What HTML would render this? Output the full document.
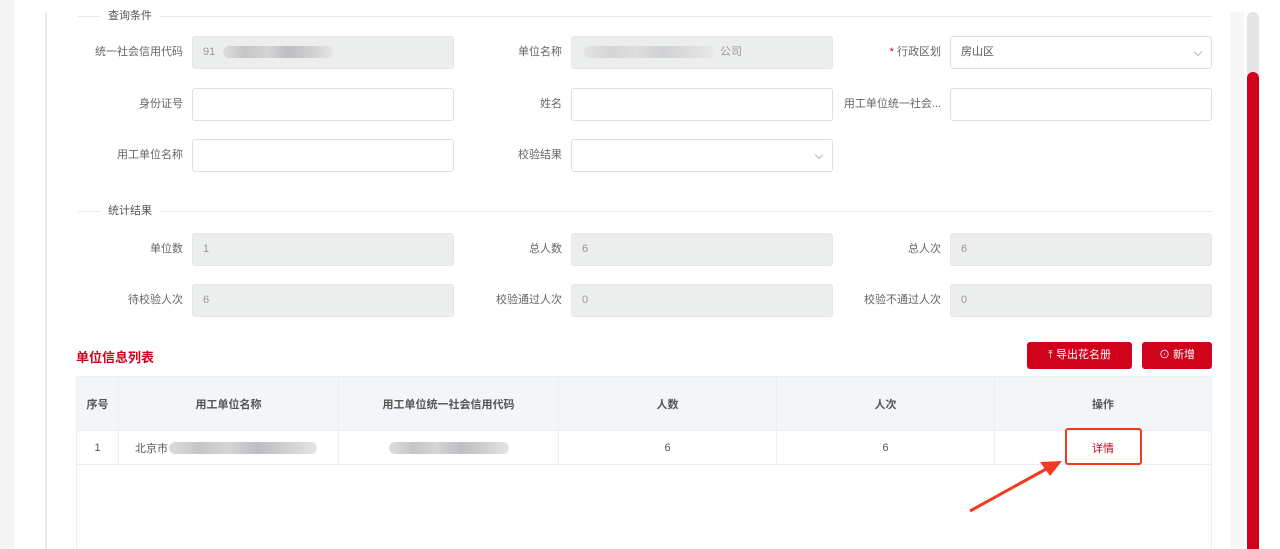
<!DOCTYPE html>
<html><head><meta charset="utf-8"><style>
*{box-sizing:border-box;margin:0;padding:0}
html,body{width:1280px;height:549px;overflow:hidden}
body{background:#fff;font-family:"Liberation Sans","Noto Sans CJK SC",sans-serif;font-size:12px;color:#666;position:relative}
.a{position:absolute}
.lbl{position:absolute;text-align:right;width:120px;line-height:32px;font-size:11px;color:#666}
.inp{position:absolute;width:262px;height:33px;border:1px solid #dcdfe6;border-radius:3px;background:#fff;line-height:31px;padding-left:10px;color:#999;font-size:11px}
.dis{background:#eceded;border-color:#e4e6e8}
.sec{position:absolute;left:78px;width:1134px;height:1px;background:#e6e9ee}
.sect{position:absolute;left:100px;background:#fff;padding:0 8px;font-size:11px;color:#555;line-height:14px}
.chev{position:absolute;right:10px;top:12px;width:6px;height:6px;border-right:1px solid #bbb;border-bottom:1px solid #bbb;transform:rotate(45deg)}
.btn{position:absolute;background:#d0021b;color:#fff;border-radius:3px;height:27px;line-height:27px;text-align:center;font-size:11px}
.blur{position:absolute;height:12px;background:linear-gradient(90deg,#ddd,#c6c6c6,#d4d4d4,#bdbec2,#d0d0d0,#e4e4e4);border-radius:6px}
table{border-collapse:collapse;position:absolute;left:76px;top:376px;width:1136px}
td,th{border:1px solid #ebeef5;text-align:center;font-size:11px;color:#555}
th{background:#f3f6f9;height:54px;font-weight:bold;color:#555}
td{height:34px}
</style></head><body>
<div class="a" style="left:0;top:0;width:14px;height:549px;background:#f4f4f5"></div>
<div class="a" style="left:45px;top:12px;width:2px;height:537px;background:#ececec"></div>
<div class="a" style="left:1230px;top:12px;width:14px;height:537px;background:#f7f7f7"></div>
<div class="a" style="left:1247px;top:12px;width:12px;height:537px;background:#e4e4e4;border-radius:6px"></div>
<div class="a" style="left:1247px;top:72px;width:12px;height:477px;background:#d0021b;border-radius:6px 6px 0 0"></div>

<div class="sec" style="top:16px"></div><div class="sect" style="top:9px">查询条件</div>
<div class="lbl" style="left:63px;top:36px">统一社会信用代码</div>
<div class="inp dis" style="left:192px;top:36px">91<span class="blur" style="left:30px;top:9px;width:110px"></span></div>
<div class="lbl" style="left:442px;top:36px">单位名称</div>
<div class="inp dis" style="left:571px;top:36px"><span class="blur" style="left:12px;top:9px;width:130px;opacity:.6"></span><span style="position:absolute;left:148px">公司</span></div>
<div class="lbl" style="left:821px;top:36px"><span style="color:#d0021b">* </span>行政区划</div>
<div class="inp" style="left:950px;top:36px;color:#555">房山区<div class="chev"></div></div>

<div class="lbl" style="left:63px;top:88px">身份证号</div>
<div class="inp" style="left:192px;top:88px"></div>
<div class="lbl" style="left:442px;top:88px">姓名</div>
<div class="inp" style="left:571px;top:88px"></div>
<div class="lbl" style="left:821px;top:88px;width:120px;overflow:hidden;white-space:nowrap">用工单位统一社会...</div>
<div class="inp" style="left:950px;top:88px"></div>

<div class="lbl" style="left:63px;top:139px">用工单位名称</div>
<div class="inp" style="left:192px;top:139px"></div>
<div class="lbl" style="left:442px;top:139px">校验结果</div>
<div class="inp" style="left:571px;top:139px"><div class="chev"></div></div>

<div class="sec" style="top:211px"></div><div class="sect" style="top:204px">统计结果</div>
<div class="lbl" style="left:63px;top:233px">单位数</div><div class="inp dis" style="left:192px;top:233px">1</div>
<div class="lbl" style="left:442px;top:233px">总人数</div><div class="inp dis" style="left:571px;top:233px">6</div>
<div class="lbl" style="left:821px;top:233px">总人次</div><div class="inp dis" style="left:950px;top:233px">6</div>
<div class="lbl" style="left:63px;top:284px">待校验人次</div><div class="inp dis" style="left:192px;top:284px">6</div>
<div class="lbl" style="left:442px;top:284px">校验通过人次</div><div class="inp dis" style="left:571px;top:284px">0</div>
<div class="lbl" style="left:821px;top:284px">校验不通过人次</div><div class="inp dis" style="left:950px;top:284px">0</div>

<div class="a" style="left:76px;top:347px;font-size:13px;font-weight:bold;color:#d0021b">单位信息列表</div>
<div class="btn" style="left:1027px;top:342px;width:105px">⤒ 导出花名册</div>
<div class="btn" style="left:1142px;top:342px;width:70px">⊙ 新增</div>

<table>
<tr><th style="width:42px">序号</th><th style="width:220px">用工单位名称</th><th style="width:220px">用工单位统一社会信用代码</th><th style="width:218px">人数</th><th style="width:218px">人次</th><th>操作</th></tr>
<tr><td>1</td><td style="text-align:left;padding-left:16px;position:relative">北京市<span class="blur" style="left:50px;top:11px;width:148px"></span></td><td style="position:relative"><span class="blur" style="left:50px;top:11px;width:120px"></span></td><td>6</td><td>6</td><td style="color:#d0021b">详情</td></tr>
<tr><td colspan="6" style="height:84px;border-bottom:none"></td></tr>
</table>
<div class="a" style="left:1065px;top:428px;width:77px;height:37px;border:2px solid #f23a1e;border-radius:3px"></div>
<svg class="a" style="left:0;top:0" width="1280" height="549"><path d="M970 511 L1048 468" stroke="#f23a1e" stroke-width="3"/><path d="M1062 461 L1040 462 L1050 476 Z" fill="#f23a1e"/></svg>
</body></html>
